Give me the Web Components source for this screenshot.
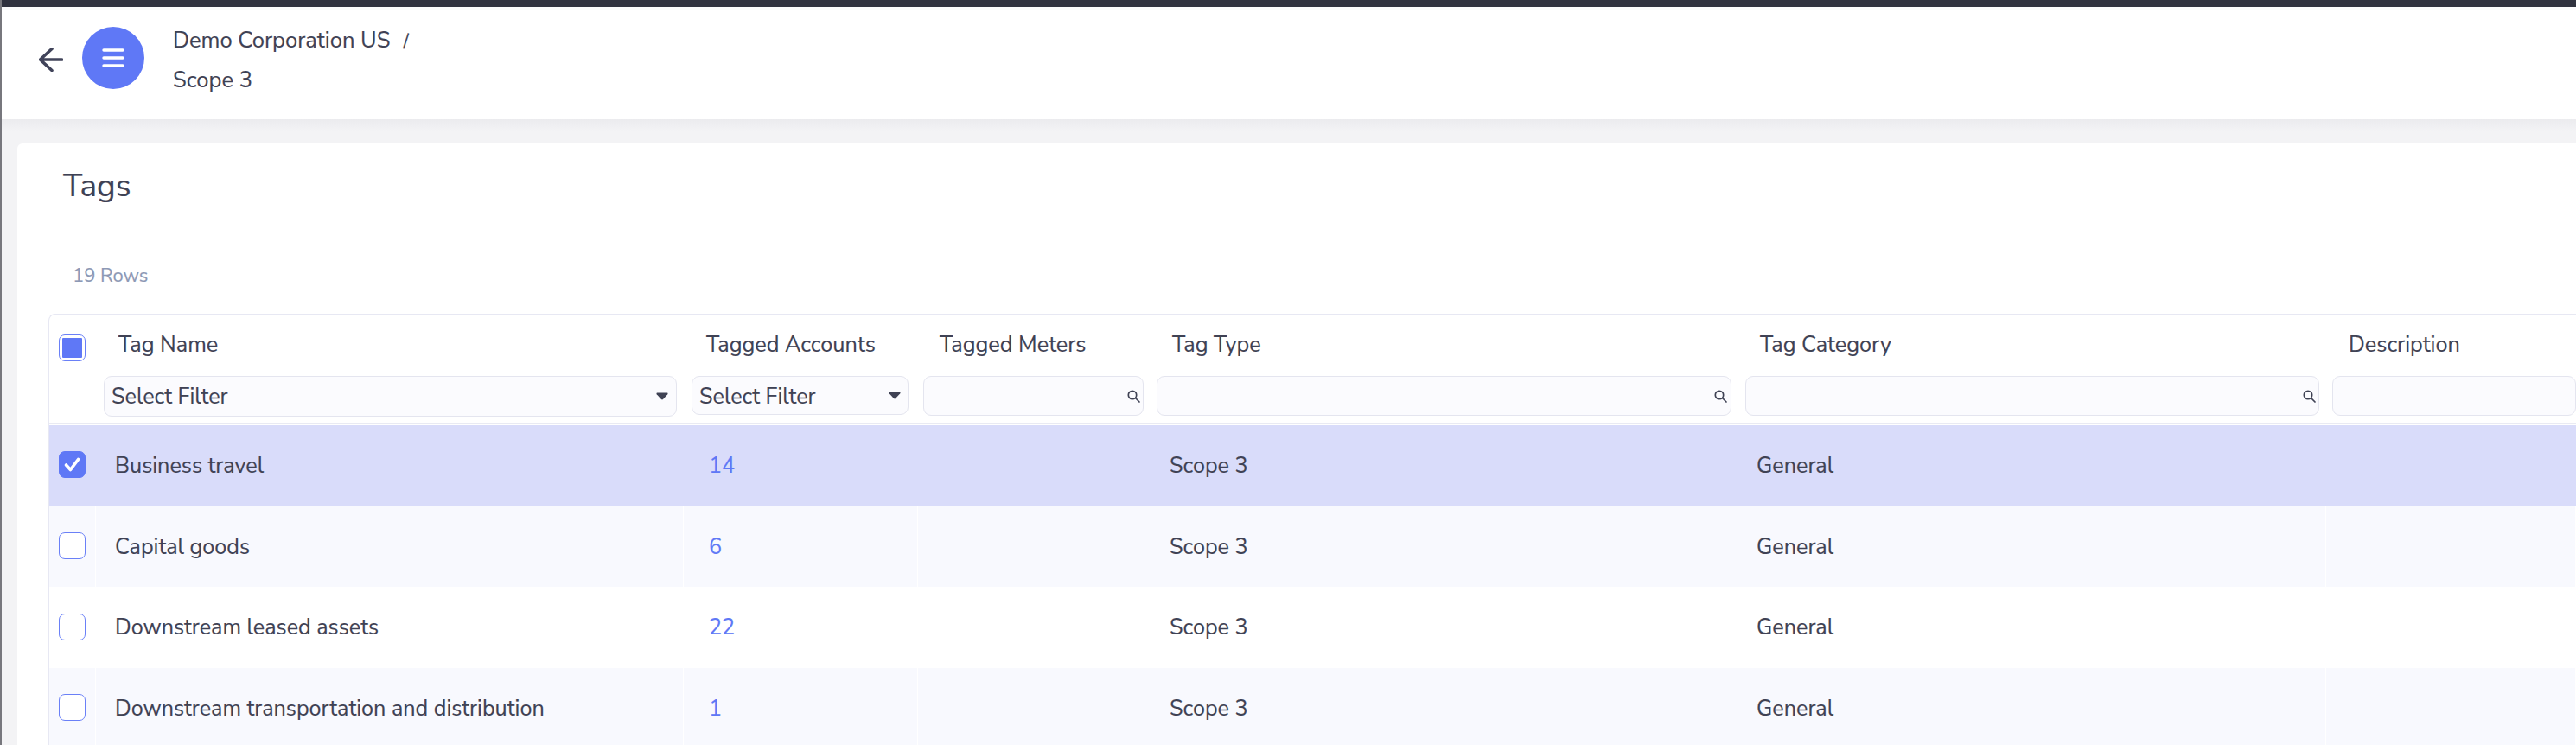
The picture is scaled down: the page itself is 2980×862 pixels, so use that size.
<!DOCTYPE html>
<html><head><meta charset="utf-8"><title>Tags</title>
<style>
html,body{margin:0;padding:0;height:100%;overflow:hidden;background:#f3f3f5}
body{font-family:"Nunito Sans","Lato","Noto Sans",sans-serif;color:#3f4254;-webkit-text-stroke:.15px currentColor}
</style></head><body>
<template id="t-app"><style>
:host{display:flex;flex-direction:column;width:2980px;height:862px;overflow:hidden;box-sizing:border-box;background:#f3f3f5;border-left:2px solid #77777d}
.bar{height:8px;background:#30323f;margin-left:-2px;flex:none}
.main{flex:1;padding:28px 0 0 18px;min-height:0;background:linear-gradient(#ebebee 0,#f3f3f5 14px)}
</style><div class="bar"></div><slot name="header"></slot><div class="main"><slot></slot></div></template>

<template id="t-header"><style>
:host{display:flex;align-items:center;height:130px;flex:none;background:#fff;padding-left:43px;box-sizing:border-box;border-top:4px solid #fbfbfc}
.back{width:28px;height:28px;flex:none;margin-right:22px;margin-top:-13px}
.menu{width:72px;height:72px;border-radius:50%;background:#5f78f6;display:flex;align-items:center;justify-content:center;flex:none;margin-top:-16px}
.crumbs{margin-left:33px;display:grid;grid-template-rows:46px 46px;font-size:25.600px;margin-top:-11px;color:#3f4254;align-items:center}
.sep{margin-left:15px;font-size:22px}
</style>
<svg class="back" viewBox="0 0 28 28" fill="none" stroke="#41445a" stroke-width="3.600" stroke-linecap="round" stroke-linejoin="round"><path d="M26.500 14H2M15 1.500 1.500 14 15 26.500"/></svg>
<div class="menu"><svg width="26" height="22" viewBox="0 0 26 22" fill="none" stroke="#fff" stroke-width="3.400" stroke-linecap="round"><path d="M2 2h22M2 11h22M2 20h22"/></svg></div>
<div class="crumbs"><div><slot name="parent"></slot><span class="sep">/</span></div><div><slot name="current"></slot></div></div></template>

<template id="t-card"><style>
:host{display:block;background:#fff;height:100%;box-sizing:border-box;padding:0 0 0 36px;border-radius:6px 0 0 0}
h1{margin:0 0 0 17px;height:132px;font-size:37px;font-weight:400;line-height:52px;padding-top:23px;box-sizing:border-box;color:#3f4254}
.line{height:1px;background:#eceefa}
.count{font-size:22px;color:#8d99b5;padding-left:28px;height:64px;line-height:40px;box-sizing:border-box}
</style><h1><slot name="title"></slot></h1><div class="line"></div><div class="count"><slot name="count"></slot></div><slot></slot></template>

<template id="t-table"><style>
:host{display:block;border:1px solid #e7e8f3;border-right:0;border-bottom:0;border-radius:8px 0 0 0;--cols:54px 680px 271px 270px 679px 680px 1fr}
</style><slot></slot></template>

<template id="t-head"><style>
:host{display:grid;grid-template-columns:var(--cols);height:128px;box-sizing:border-box;background:linear-gradient(#e9eaf3,#e9eaf3) left bottom 1px/100% 2px no-repeat}
</style><slot></slot></template>

<template id="t-headbox"><style>
:host{display:block;padding:23px 0 0 11px}
</style><slot></slot></template>

<template id="t-hcell"><style>
:host{display:flex;flex-direction:column;padding:0 var(--pr,8px) 0 var(--pl,9px);box-sizing:border-box;min-width:0}
.label{height:71px;padding-top:20px;box-sizing:border-box;line-height:30px;font-size:25.300px;padding-left:var(--lab,17px);white-space:nowrap;color:#3f4254}
</style><div class="label"><slot name="label"></slot></div><slot></slot></template>

<template id="t-filter"><style>
:host{display:flex;align-items:center;justify-content:space-between;height:var(--h,46px);box-sizing:border-box;background:#fbfbfe;border:1px solid #e4e5ef;border-radius:9px;padding:0 var(--ir,3px) 0 8px;font-size:25.200px;color:#3f4254;white-space:nowrap}
.t{padding-top:var(--tt,0)}
.s{display:flex}
</style><span class="t"><slot></slot></span><span class="s"><slot name="icon"></slot></span></template>

<template id="t-caret"><style>:host{display:flex}</style><svg width="14" height="9" viewBox="0 0 14 9"><path d="M1.500 .5h11c1 0 1.400 1 .8 1.700L8 8c-.6.6-1.400.6-2 0L.7 2.200C.1 1.500.5.500 1.500.5z" fill="#3f4254"/></svg></template>

<template id="t-search"><style>:host{display:flex}</style><svg width="15" height="15" viewBox="0 0 15 15" fill="none" stroke="#3f4254" stroke-width="1.700" stroke-linecap="round"><circle cx="6" cy="6" r="4.700"/><path d="M9.500 9.500 14 14"/></svg></template>

<template id="t-check"><style>
:host{display:flex;width:31px;height:31px;box-sizing:border-box;border-radius:7px;border:1.500px solid #6a80f7;background:#fff;align-items:center;justify-content:center;flex:none}
:host([state=all]){padding:3px}
:host([state=on]){background:#5f78f6;border-color:#5f78f6}
i{display:none;width:100%;height:100%;background:#5f78f6;border-radius:1px}
:host([state=all]) i{display:block}
svg{display:none}
:host([state=on]) svg{display:block}
</style><i></i><svg width="19" height="17" viewBox="0 0 19 17" fill="none" stroke="#fff" stroke-width="3.600" stroke-linecap="round" stroke-linejoin="round"><path d="M2.500 9 7.500 14.500 16.500 2.500"/></svg></template>

<template id="t-row"><style>
:host{display:grid;grid-template-columns:var(--cols);height:93.700px;background:#fff;font-size:25.200px;color:#3f4254}
:host([kind=sel]){background:#d9dcfa}
:host([kind=alt]){background:#f8f9fe}
</style><slot></slot></template>

<template id="t-cell"><style>
:host{display:flex;align-items:center;padding-left:21px;box-sizing:border-box;border-right:1px solid transparent;white-space:nowrap;min-width:0}
:host([box]){padding-left:11px;padding-bottom:2px}
:host([name]){padding-left:22px}
:host-context(tag-row[kind=alt]){border-right-color:#fff}
:host([link]){color:#5f78f6;padding-left:29px}
</style><slot></slot></template>

<app-shell>
  <top-header slot="header"><span slot="parent">Demo Corporation US</span><span slot="current">Scope 3</span></top-header>
  <tags-card>
    <span slot="title">Tags</span><span slot="count">19 Rows</span>
    <tag-table>
      <tag-head>
        <tag-headbox><tag-check state="all"></tag-check></tag-headbox>
        <tag-hcell style="--h:47px;--ir:9px"><span slot="label">Tag Name</span><tag-filter>Select Filter<tag-caret slot="icon"></tag-caret></tag-filter></tag-hcell>
        <tag-hcell style="--h:45px;--ir:8px;--pr:11px;--tt:2px"><span slot="label">Tagged Accounts</span><tag-filter>Select Filter<tag-caret slot="icon"></tag-caret></tag-filter></tag-hcell>
        <tag-hcell style="--pl:6px;--pr:9px;--lab:19px"><span slot="label">Tagged Meters</span><tag-filter><tag-search slot="icon"></tag-search></tag-filter></tag-hcell>
        <tag-hcell style="--pl:6px;--lab:18px;--ir:4px"><span slot="label">Tag Type</span><tag-filter><tag-search slot="icon"></tag-search></tag-filter></tag-hcell>
        <tag-hcell style="--pl:8px;--lab:17px"><span slot="label">Tag Category</span><tag-filter><tag-search slot="icon"></tag-search></tag-filter></tag-hcell>
        <tag-hcell style="--pr:0px;--pl:7px;--lab:19px"><span slot="label">Description</span><tag-filter></tag-filter></tag-hcell>
      </tag-head>
      <tag-row kind="sel"><tag-cell box><tag-check state="on"></tag-check></tag-cell><tag-cell name>Business travel</tag-cell><tag-cell link>14</tag-cell><tag-cell></tag-cell><tag-cell>Scope 3</tag-cell><tag-cell>General</tag-cell><tag-cell></tag-cell></tag-row>
      <tag-row kind="alt"><tag-cell box><tag-check></tag-check></tag-cell><tag-cell name>Capital goods</tag-cell><tag-cell link>6</tag-cell><tag-cell></tag-cell><tag-cell>Scope 3</tag-cell><tag-cell>General</tag-cell><tag-cell></tag-cell></tag-row>
      <tag-row><tag-cell box><tag-check></tag-check></tag-cell><tag-cell name>Downstream leased assets</tag-cell><tag-cell link>22</tag-cell><tag-cell></tag-cell><tag-cell>Scope 3</tag-cell><tag-cell>General</tag-cell><tag-cell></tag-cell></tag-row>
      <tag-row kind="alt"><tag-cell box><tag-check></tag-check></tag-cell><tag-cell name>Downstream transportation and distribution</tag-cell><tag-cell link>1</tag-cell><tag-cell></tag-cell><tag-cell>Scope 3</tag-cell><tag-cell>General</tag-cell><tag-cell></tag-cell></tag-row>
    </tag-table>
  </tags-card>
</app-shell>
<script>
const map={'app-shell':'t-app','top-header':'t-header','tags-card':'t-card','tag-table':'t-table','tag-head':'t-head','tag-headbox':'t-headbox','tag-hcell':'t-hcell','tag-filter':'t-filter','tag-caret':'t-caret','tag-search':'t-search','tag-check':'t-check','tag-row':'t-row','tag-cell':'t-cell'};
for(const [name,id] of Object.entries(map)){
  customElements.define(name,class extends HTMLElement{
    constructor(){super();this.attachShadow({mode:'open'}).appendChild(document.getElementById(id).content.cloneNode(true));}
  });
}
</script>
</body></html>
